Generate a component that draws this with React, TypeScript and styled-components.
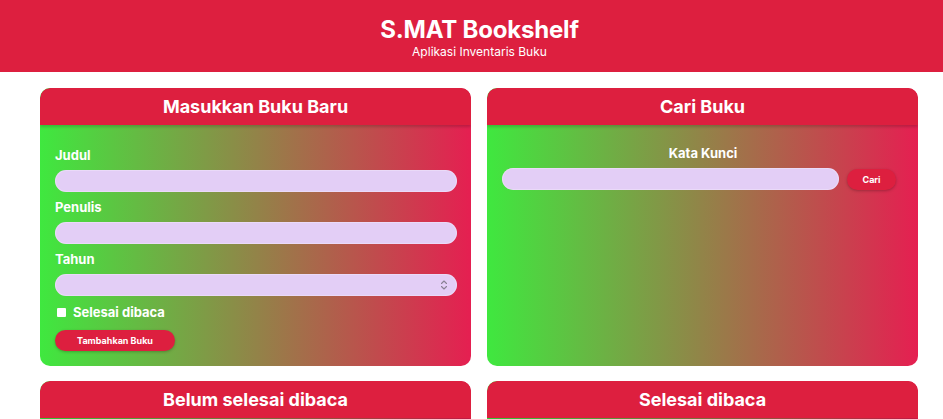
import React from "react";
import styled, { createGlobalStyle } from "styled-components";

const GlobalStyle = createGlobalStyle`
  * { box-sizing: border-box; }
  body {
    margin: 0;
    font-family: Inter, "Noto Sans", sans-serif;
    background: #ffffff;
    color: #ffffff;
  }
`;

const RED = "#dd1f3f";

const Header = styled.header`
  background: ${RED};
  height: 72px;
  display: flex;
  flex-direction: column;
  align-items: center;
  justify-content: center;
  padding: 2px 0 0 16px;
`;

const Title = styled.h1`
  margin: 0;
  font-size: 24px;
  font-weight: 700;
  line-height: 30px;
  letter-spacing: -0.2px;
`;

const Subtitle = styled.p`
  margin: 0;
  font-size: 12px;
  line-height: 14px;
`;

const Main = styled.main`
  display: grid;
  grid-template-columns: 431px 431px;
  column-gap: 16px;
  row-gap: 15px;
  padding: 16px 0 0 40px;
`;

const Card = styled.section`
  border-radius: 10px;
  background: linear-gradient(to right, #3fe83f, #e51f51);
  display: flex;
  flex-direction: column;
  overflow: hidden;
`;

const CardHeader = styled.div`
  background: ${RED};
  height: 37px;
  display: flex;
  align-items: center;
  justify-content: center;
  border-radius: 10px 10px 0 0;
  box-shadow: 0 2px 3px rgba(0, 0, 0, 0.18);
  position: relative;
  z-index: 1;
`;

const CardTitle = styled.h2`
  margin: 0;
  font-size: 18px;
  font-weight: 700;
`;

const CardBody = styled.form<{ $center?: boolean }>`
  display: flex;
  flex-direction: column;
  align-items: ${(p) => (p.$center ? "center" : "stretch")};
  padding: ${(p) => (p.$center ? "20px" : "22px")} 14px 15px 15px;
  flex: 1;
`;

const Label = styled.label<{ $center?: boolean }>`
  font-size: 13px;
  font-weight: 700;
  line-height: 16px;
  margin-bottom: 7px;
  text-align: ${(p) => (p.$center ? "center" : "left")};
`;

const InputWrap = styled.div`
  position: relative;
  margin-bottom: 7px;
  width: 100%;
`;

const TextInput = styled.input`
  display: block;
  width: 100%;
  height: 22px;
  border: none;
  border-radius: 11px;
  background: #e3cef6;
  padding: 0 12px;
  font-family: inherit;
  outline: none;
  box-shadow: inset 0 0 0 1px rgba(255, 255, 255, 0.25);
  -moz-appearance: textfield;
  &::-webkit-inner-spin-button,
  &::-webkit-outer-spin-button {
    -webkit-appearance: none;
    margin: 0;
  }
`;

const Spinner = styled.svg`
  position: absolute;
  right: 9px;
  top: 5px;
  width: 8px;
  height: 12px;
`;

const CheckRow = styled.div`
  display: flex;
  align-items: center;
  gap: 7px;
  height: 16px;
  margin: 1px 0 10px 2px;
`;

const Check = styled.input`
  appearance: none;
  -webkit-appearance: none;
  width: 9px;
  height: 9px;
  margin: 0;
  background: #ffffff;
  border-radius: 1px;
`;

const CheckLabel = styled.label`
  font-size: 13px;
  font-weight: 700;
`;

const Button = styled.button<{ $w: number }>`
  width: ${(p) => p.$w}px;
  height: 21px;
  border: none;
  border-radius: 11px;
  background: ${RED};
  color: #ffffff;
  font-family: inherit;
  font-size: 9px;
  font-weight: 700;
  box-shadow: 0 1px 3px rgba(0, 0, 0, 0.25);
  padding: 0;
  flex-shrink: 0;
`;

const SearchRow = styled.div`
  display: flex;
  align-items: center;
  gap: 8px;
  width: 100%;
  padding-right: 8px;
`;

const SearchInput = styled(TextInput)`
  flex: 1;
  width: auto;
`;

export default function App() {
  return (
    <>
      <GlobalStyle />
      <Header>
        <Title>S.MAT Bookshelf</Title>
        <Subtitle>Aplikasi Inventaris Buku</Subtitle>
      </Header>
      <Main>
        <Card>
          <CardHeader>
            <CardTitle>Masukkan Buku Baru</CardTitle>
          </CardHeader>
          <CardBody>
            <Label htmlFor="judul">Judul</Label>
            <InputWrap>
              <TextInput id="judul" type="text" />
            </InputWrap>
            <Label htmlFor="penulis">Penulis</Label>
            <InputWrap>
              <TextInput id="penulis" type="text" />
            </InputWrap>
            <Label htmlFor="tahun">Tahun</Label>
            <InputWrap>
              <TextInput id="tahun" type="number" />
              <Spinner viewBox="0 0 8 12" fill="none" stroke="#8a8194" strokeWidth="1.1" strokeLinecap="round" strokeLinejoin="round">
                <path d="M1.5 4.5 L4 2 L6.5 4.5" />
                <path d="M1.5 7.5 L4 10 L6.5 7.5" />
              </Spinner>
            </InputWrap>
            <CheckRow>
              <Check id="selesai" type="checkbox" />
              <CheckLabel htmlFor="selesai">Selesai dibaca</CheckLabel>
            </CheckRow>
            <Button type="button" $w={120}>Tambahkan Buku</Button>
          </CardBody>
        </Card>
        <Card>
          <CardHeader>
            <CardTitle>Cari Buku</CardTitle>
          </CardHeader>
          <CardBody $center>
            <Label $center htmlFor="kunci">Kata Kunci</Label>
            <SearchRow>
              <SearchInput id="kunci" type="text" />
              <Button type="button" $w={49}>Cari</Button>
            </SearchRow>
          </CardBody>
        </Card>
        <Card>
          <CardHeader>
            <CardTitle>Belum selesai dibaca</CardTitle>
          </CardHeader>
          <CardBody />
        </Card>
        <Card>
          <CardHeader>
            <CardTitle>Selesai dibaca</CardTitle>
          </CardHeader>
          <CardBody />
        </Card>
      </Main>
    </>
  );
}
